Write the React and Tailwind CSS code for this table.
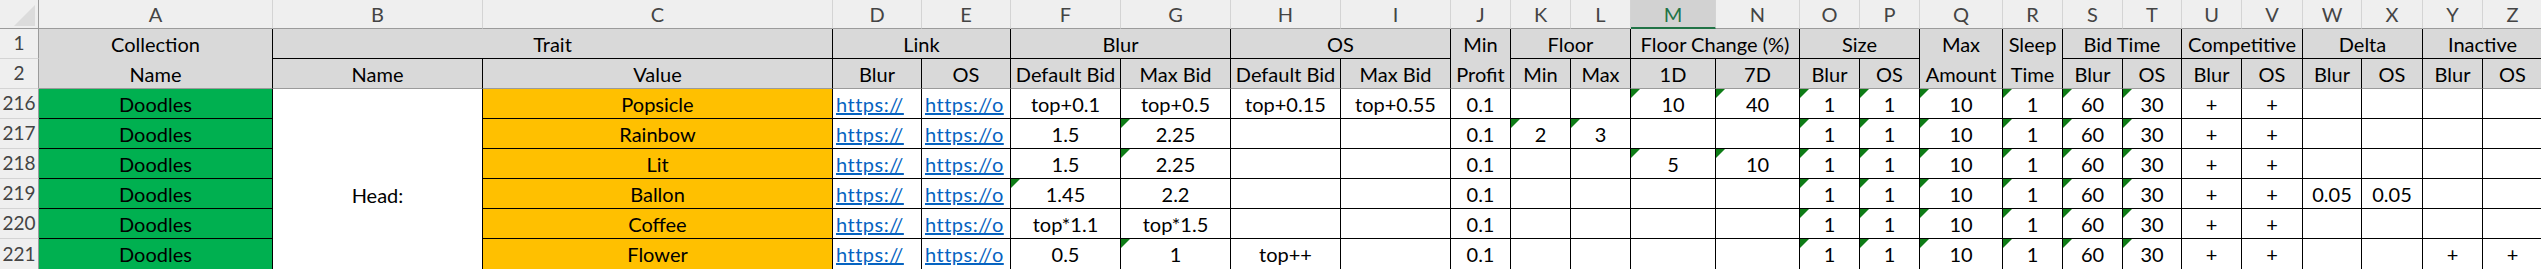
import React from 'react';

const cols = ['A', 'B', 'C', 'D', 'E', 'F', 'G', 'H', 'I', 'J', 'K', 'L', 'M', 'N', 'O', 'P', 'Q', 'R', 'S', 'T', 'U', 'V', 'W', 'X', 'Y', 'Z'];

// shared values across every data row
const common = { O: '1', P: '1', Q: '10', R: '1', S: '60', T: '30', U: '+', V: '+' };

const rows = [
  { n: 216, value: 'Popsicle', v: { F: 'top+0.1', G: 'top+0.5', H: 'top+0.15', I: 'top+0.55', J: '0.1', M: '10', N: '40' }, tri: 'MNOPQRST' },
  { n: 217, value: 'Rainbow', v: { F: '1.5', G: '2.25', J: '0.1', K: '2', L: '3' }, tri: 'GKLOPQRST' },
  { n: 218, value: 'Lit', v: { F: '1.5', G: '2.25', J: '0.1', M: '5', N: '10' }, tri: 'GMNOPQRST' },
  { n: 219, value: 'Ballon', v: { F: '1.45', G: '2.2', J: '0.1', W: '0.05', X: '0.05' }, tri: 'FOPQRST' },
  { n: 220, value: 'Coffee', v: { F: 'top*1.1', G: 'top*1.5', J: '0.1' }, tri: 'OPQRST' },
  { n: 221, value: 'Flower', v: { F: '0.5', G: '1', H: 'top++', J: '0.1', Y: '+', Z: '+' }, tri: 'GOPQRST' },
];

const groups = [
  { label: 'Trait', sub: ['Name', 'Value'] },
  { label: 'Link', sub: ['Blur', 'OS'] },
  { label: 'Blur', sub: ['Default Bid', 'Max Bid'] },
  { label: 'OS', sub: ['Default Bid', 'Max Bid'] },
  { tall: ['Min', 'Profit'] },
  { label: 'Floor', sub: ['Min', 'Max'] },
  { label: 'Floor Change (%)', sub: ['1D', '7D'] },
  { label: 'Size', sub: ['Blur', 'OS'] },
  { tall: ['Max', 'Amount'] },
  { tall: ['Sleep', 'Time'] },
  { label: 'Bid Time', sub: ['Blur', 'OS'] },
  { label: 'Competitive', sub: ['Blur', 'OS'] },
  { label: 'Delta', sub: ['Blur', 'OS'] },
  { label: 'Inactive', sub: ['Blur', 'OS'] },
];

function Tri() {
  return (
    <svg className="absolute left-0 top-0" width="9" height="9" viewBox="0 0 9 9">
      <polygon points="0,0 9,0 0,9" fill="#0e7c16" />
    </svg>
  );
}

function TallHeader({ lines }) {
  return (
    <div className="row-span-2 flex flex-col bg-[#d9d9d9] border-r border-b border-r-black border-b-[#9b9b9b]">
      <div className="h-[30px] flex items-center justify-center">{lines[0]}</div>
      <div className="h-[29px] flex items-center justify-center">{lines[1]}</div>
    </div>
  );
}

export default function App() {
  const hdrCell = 'flex items-center justify-center bg-[#d9d9d9] border-r border-b border-black whitespace-nowrap';
  const rowNum = 'flex items-center justify-center bg-[#efefef] border-r border-b border-r-[#9b9b9b] border-b-[#d4d4d4] text-[#444] text-[19px]';
  const cell = 'relative flex items-center justify-center border-r border-b border-black overflow-hidden whitespace-nowrap';

  return (
    <div className="w-[2541px] h-[269px] overflow-hidden bg-white font-[Lato,sans-serif] text-[20px] text-black">
      <div className="grid grid-cols-[39px_234px_210px_350px_89px_89px_110px_110px_110px_110px_60px_60px_60px_85px_84px_60px_60px_83px_60px_60px_59px_60px_61px_59px_61px_60px_60px] grid-rows-[29px_repeat(7,30px)_31px] w-[2543px]">
        {/* corner */}
        <div className="flex items-end justify-end bg-[#efefef] border-r border-b border-[#9b9b9b] pr-[3px] pb-[2px]">
          <svg width="21" height="21" viewBox="0 0 21 21">
            <polygon points="21,0 21,21 0,21" fill="#dcdcdc" />
          </svg>
        </div>

        {/* column letters */}
        {cols.map((c) =>
          c === 'M' ? (
            <div key={c} className="flex items-center justify-center bg-[#d2d2d2] border-r border-r-[#d4d4d4] border-b-2 border-b-[#217346] text-[#217346]">
              {c}
            </div>
          ) : (
            <div key={c} className="flex items-center justify-center bg-[#efefef] border-r border-b border-r-[#d4d4d4] border-b-[#9b9b9b] text-[#444]">
              {c}
            </div>
          )
        )}

        {/* header row 1 */}
        <div className={rowNum}>1</div>
        <TallHeader lines={['Collection', 'Name']} />
        {groups.map((g, i) =>
          g.tall ? (
            <TallHeader key={i} lines={g.tall} />
          ) : (
            <div key={i} className={`${hdrCell} col-span-2`}>{g.label}</div>
          )
        )}

        {/* header row 2 */}
        <div className={`${rowNum} border-b-[#9b9b9b]`}>2</div>
        {groups
          .filter((g) => !g.tall)
          .flatMap((g) => g.sub)
          .map((s, i) => (
            <div key={i} className="flex items-center justify-center bg-[#d9d9d9] border-r border-b border-r-black border-b-[#9b9b9b] whitespace-nowrap overflow-hidden">
              {s}
            </div>
          ))}

        {/* data rows */}
        {rows.map((r, ri) => (
          <React.Fragment key={r.n}>
            <div className={`${rowNum} ${ri === rows.length - 1 ? 'border-b-0' : ''}`}>{r.n}</div>
            <div className={`${cell} bg-[#00b050]`}>Doodles</div>
            {ri === 0 && (
              <div className="row-span-6 flex items-center justify-center pt-[30px] bg-white border-r border-black">Head:</div>
            )}
            <div className={`${cell} bg-[#ffc000]`}>{r.value}</div>
            <div className={`${cell} justify-start pl-[3px]`}>
              <span className="text-[#0563c1] underline tracking-[0.5px]">https://</span>
            </div>
            <div className={`${cell} justify-start pl-[3px]`}>
              <span className="text-[#0563c1] underline tracking-[0.5px]">https://o</span>
            </div>
            {cols.slice(5).map((c) => {
              const val = r.v[c] ?? common[c] ?? '';
              return (
                <div key={c} className={cell}>
                  {r.tri.includes(c) && <Tri />}
                  {val}
                </div>
              );
            })}
          </React.Fragment>
        ))}
      </div>
    </div>
  );
}
